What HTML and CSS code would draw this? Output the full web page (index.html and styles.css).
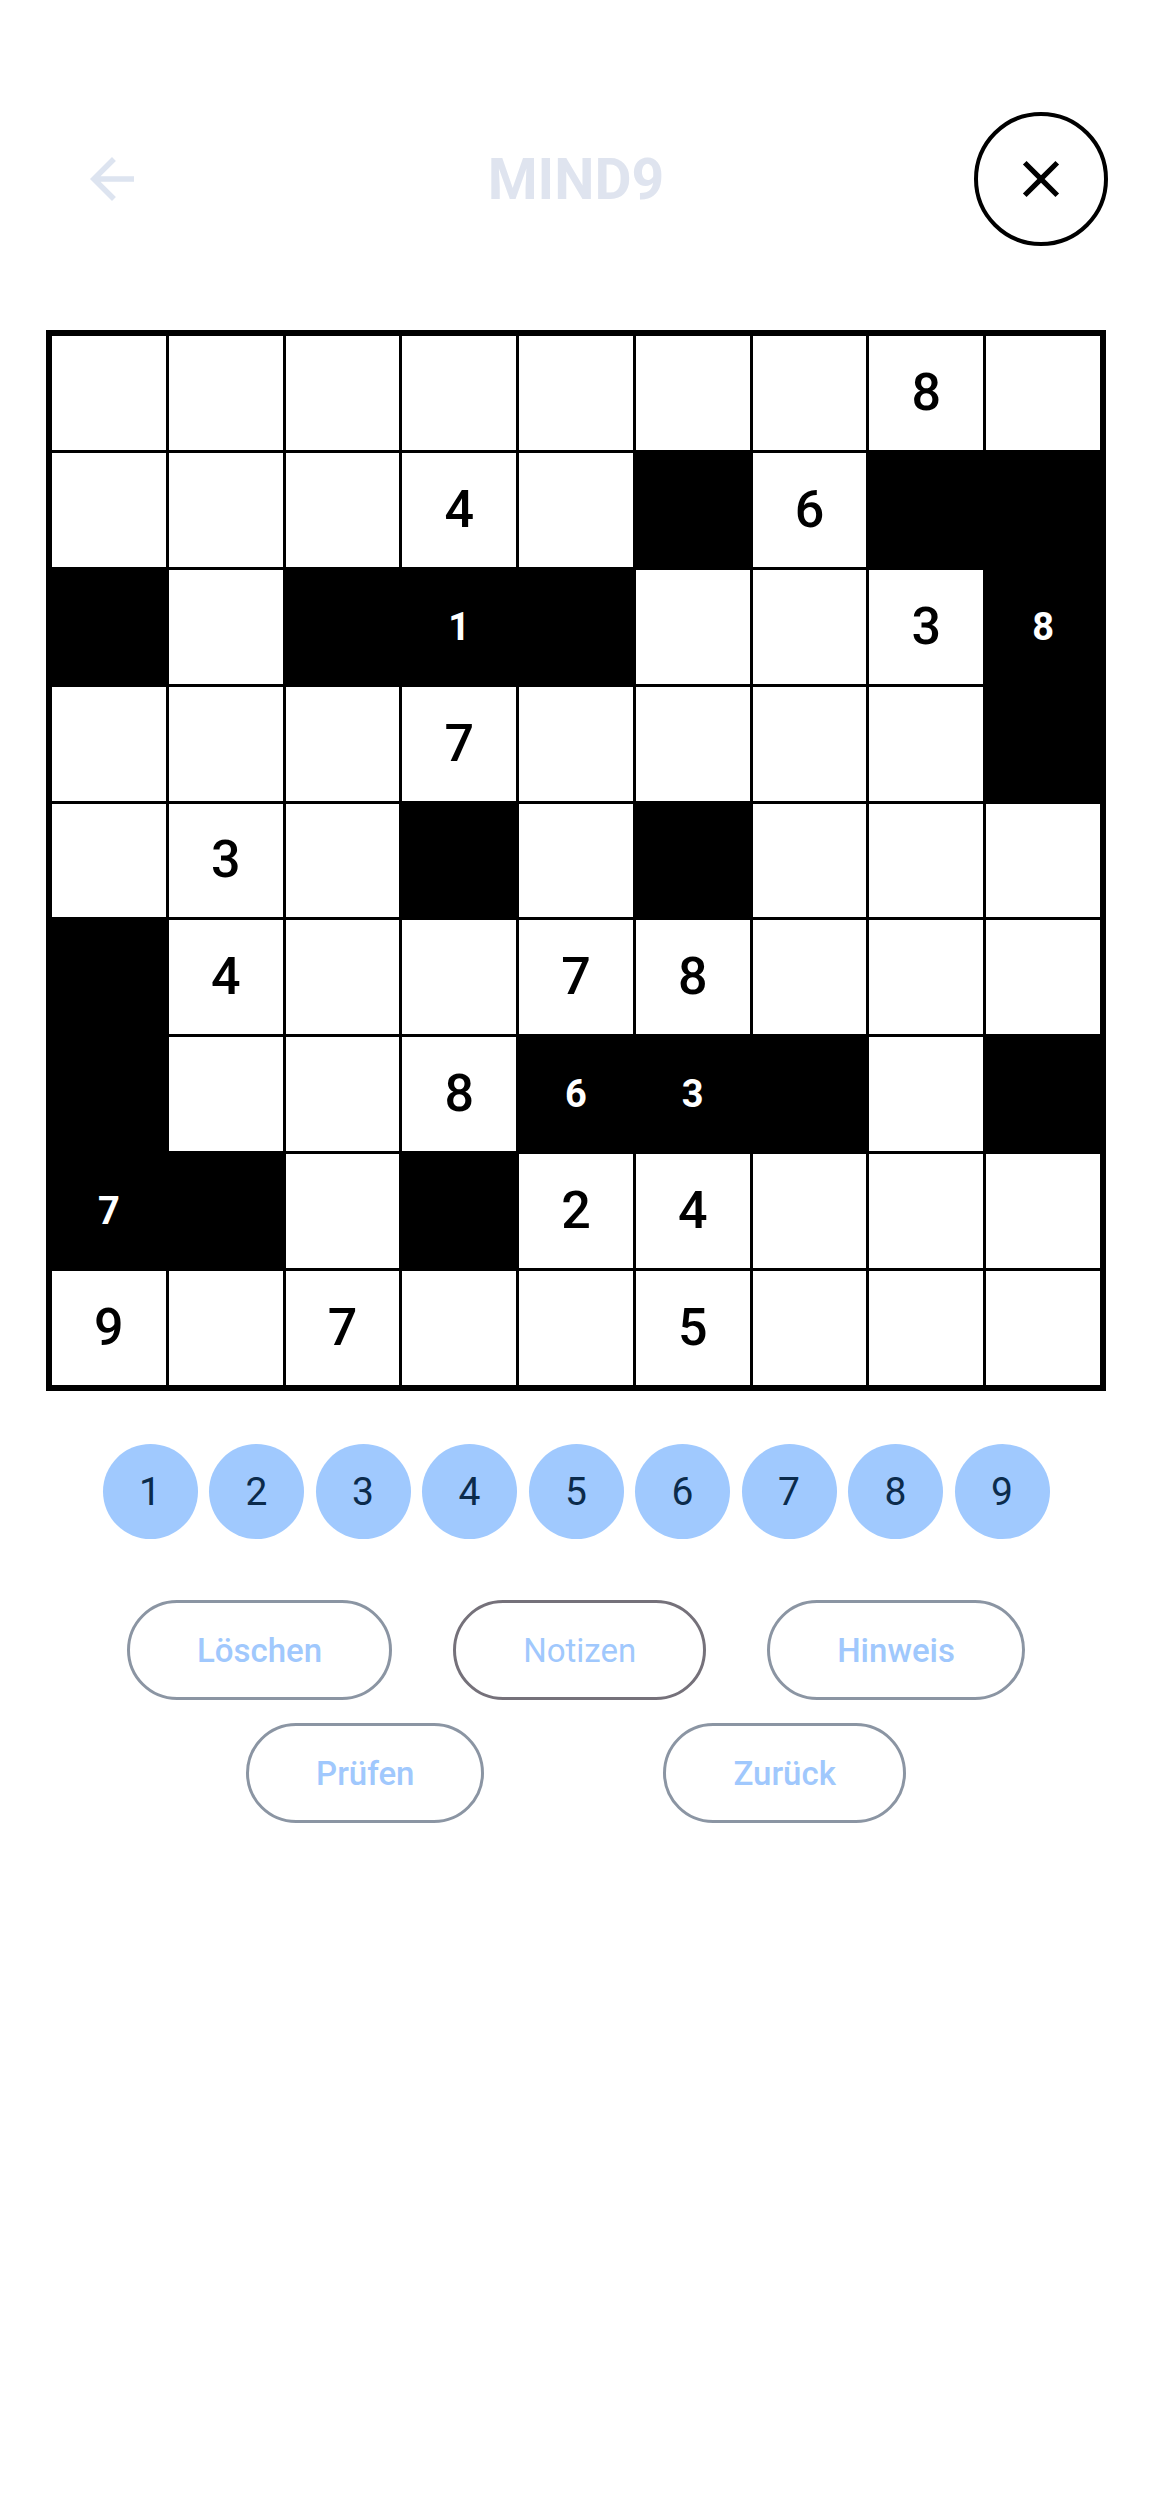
FILE: index.html
```html
<!DOCTYPE html>
<html lang="de">
<head>
<meta charset="utf-8">
<title>MIND9</title>
<link rel="stylesheet" href="styles.css">
</head>
<body>
<div class="app">
  <header class="topbar">
    <div class="left">
      <svg class="back" viewBox="0 0 24 24" width="66" height="66"><path d="M20 11H7.83l5.59-5.59L12 4l-8 8 8 8 1.41-1.41L7.83 13H20v-2z"/></svg>
    </div>
    <h1 class="title">MIND9</h1>
    <div class="right">
      <div class="close">
        <svg viewBox="0 0 24 24" width="62" height="62"><path d="M19 6.41L17.59 5 12 10.59 6.41 5 5 6.41 10.59 12 5 17.59 6.41 19 12 13.41 17.59 19 19 17.59 13.41 12z"/></svg>
      </div>
    </div>
  </header>

  <div class="board">
    <div class="c"></div><div class="c"></div><div class="c"></div><div class="c"></div><div class="c"></div><div class="c"></div><div class="c"></div><div class="c">8</div><div class="c"></div>
    <div class="c"></div><div class="c"></div><div class="c"></div><div class="c">4</div><div class="c"></div><div class="c b"></div><div class="c">6</div><div class="c b"></div><div class="c b"></div>
    <div class="c b"></div><div class="c"></div><div class="c b"></div><div class="c b">1</div><div class="c b"></div><div class="c"></div><div class="c"></div><div class="c">3</div><div class="c b">8</div>
    <div class="c"></div><div class="c"></div><div class="c"></div><div class="c">7</div><div class="c"></div><div class="c"></div><div class="c"></div><div class="c"></div><div class="c b"></div>
    <div class="c"></div><div class="c">3</div><div class="c"></div><div class="c b"></div><div class="c"></div><div class="c b"></div><div class="c"></div><div class="c"></div><div class="c"></div>
    <div class="c b"></div><div class="c">4</div><div class="c"></div><div class="c"></div><div class="c">7</div><div class="c">8</div><div class="c"></div><div class="c"></div><div class="c"></div>
    <div class="c b"></div><div class="c"></div><div class="c"></div><div class="c">8</div><div class="c b">6</div><div class="c b">3</div><div class="c b"></div><div class="c"></div><div class="c b"></div>
    <div class="c b">7</div><div class="c b"></div><div class="c"></div><div class="c b"></div><div class="c">2</div><div class="c">4</div><div class="c"></div><div class="c"></div><div class="c"></div>
    <div class="c">9</div><div class="c"></div><div class="c">7</div><div class="c"></div><div class="c"></div><div class="c">5</div><div class="c"></div><div class="c"></div><div class="c"></div>
  </div>

  <div class="digits">
    <button class="digit">1</button>
    <button class="digit">2</button>
    <button class="digit">3</button>
    <button class="digit">4</button>
    <button class="digit">5</button>
    <button class="digit">6</button>
    <button class="digit">7</button>
    <button class="digit">8</button>
    <button class="digit">9</button>
  </div>

  <div class="actions">
    <div class="row row-one">
      <button class="pill">Löschen</button>
      <button class="pill pill-notes">Notizen</button>
      <button class="pill">Hinweis</button>
    </div>
    <div class="row row-two">
      <button class="pill">Prüfen</button>
      <button class="pill">Zurück</button>
    </div>
  </div>
</div>
</body>
</html>
```

FILE: styles.css
```css
* { box-sizing: border-box; }

html, body {
  margin: 0;
  padding: 0;
  background: #ffffff;
}

body {
  font-family: Roboto, "Noto Sans", "Liberation Sans", sans-serif;
  width: 1152px;
  min-height: 2496px;
}

.app {
  display: flex;
  flex-direction: column;
}

.topbar {
  display: grid;
  grid-template-columns: 1fr auto 1fr;
  align-items: center;
  height: 134px;
  margin-top: 112px;
}

.left {
  display: flex;
  align-items: center;
  padding-left: 79px;
}

.back {
  fill: #dde4f0;
  display: block;
}

.title {
  margin: 0;
  font-size: 57px;
  font-weight: 700;
  color: #dfe4ef;
  line-height: 1;
  letter-spacing: 0;
}

.right {
  display: flex;
  justify-content: flex-end;
  padding-right: 44px;
}

.close {
  width: 134px;
  height: 134px;
  border: 4px solid #000;
  border-radius: 50%;
  display: flex;
  align-items: center;
  justify-content: center;
}

.close svg {
  display: block;
  fill: #000;
}

.board {
  margin: 84px 46px 0;
  width: 1060px;
  height: 1061px;
  background: #000;
  padding: 6px;
  display: grid;
  grid-template-columns: repeat(9, 1fr);
  grid-template-rows: repeat(9, 1fr);
  gap: 3px;
}

.c {
  background: #fff;
  display: flex;
  align-items: center;
  justify-content: center;
  font-size: 52px;
  font-weight: 500;
  color: #000;
  line-height: 1;
}

.c.b {
  background: #000;
  color: #fff;
  font-size: 38px;
  font-weight: 700;
}

.digits {
  margin-top: 53px;
  display: flex;
  justify-content: center;
  gap: 11.5px;
}

.digit {
  width: 95px;
  height: 95px;
  border: none;
  border-radius: 50%;
  background: #a0c9fe;
  color: #0b2b4c;
  font-family: inherit;
  font-size: 39px;
  font-weight: 400;
  padding: 0;
  display: flex;
  align-items: center;
  justify-content: center;
}

.actions {
  margin-top: 61px;
  display: flex;
  flex-direction: column;
  gap: 23px;
}

.row {
  display: flex;
  justify-content: center;
}

.row-one { gap: 61px; }
.row-two { gap: 179px; }

.pill {
  height: 100px;
  padding: 0 67px;
  border: 3px solid #8b95a3;
  border-radius: 50px;
  background: #fff;
  color: #a0c8fd;
  font-family: inherit;
  font-size: 33px;
  font-weight: 500;
  white-space: nowrap;
}

.pill-notes {
  border-color: #75717a;
  font-weight: 400;
}
```
